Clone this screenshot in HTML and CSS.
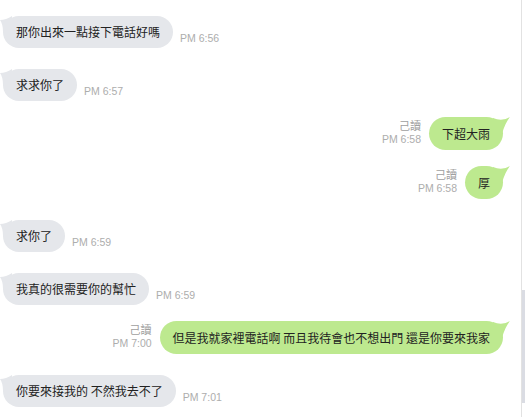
FILE: index.html
```html
<!DOCTYPE html>
<html lang="zh-Hant">
<head>
<meta charset="utf-8">
<title>Chat</title>
<link rel="stylesheet" href="styles.css">
</head>
<body>
<div class="window">
  <div class="chat">
    <div class="msg in">
      <div class="bubble">那你出來一點接下電話好嗎<svg class="tail" viewBox="0 0 12 16"><path d="M0 4 Q6 4 12 0 L12 16 L3 16 Q3 8 0 4 Z"/></svg></div>
      <span class="time">PM 6:56</span>
    </div>
    <div class="msg in">
      <div class="bubble">求求你了<svg class="tail" viewBox="0 0 12 16"><path d="M0 4 Q6 4 12 0 L12 16 L3 16 Q3 8 0 4 Z"/></svg></div>
      <span class="time">PM 6:57</span>
    </div>
    <div class="msg out">
      <div class="meta"><span class="read">己讀</span><span class="time">PM 6:58</span></div>
      <div class="bubble">下超大雨<svg class="tail" viewBox="0 0 18 18"><path d="M0 1 Q9 5 17 0 Q12 6 9 17 L0 17 Z"/></svg></div>
    </div>
    <div class="msg out">
      <div class="meta"><span class="read">己讀</span><span class="time">PM 6:58</span></div>
      <div class="bubble">厚<svg class="tail" viewBox="0 0 18 18"><path d="M0 1 Q9 5 17 0 Q12 6 9 17 L0 17 Z"/></svg></div>
    </div>
    <div class="msg in">
      <div class="bubble">求你了<svg class="tail" viewBox="0 0 12 16"><path d="M0 4 Q6 4 12 0 L12 16 L3 16 Q3 8 0 4 Z"/></svg></div>
      <span class="time">PM 6:59</span>
    </div>
    <div class="msg in">
      <div class="bubble">我真的很需要你的幫忙<svg class="tail" viewBox="0 0 12 16"><path d="M0 4 Q6 4 12 0 L12 16 L3 16 Q3 8 0 4 Z"/></svg></div>
      <span class="time">PM 6:59</span>
    </div>
    <div class="msg out">
      <div class="meta"><span class="read">己讀</span><span class="time">PM 7:00</span></div>
      <div class="bubble">但是我就家裡電話啊 而且我待會也不想出門 還是你要來我家<svg class="tail" viewBox="0 0 18 18"><path d="M0 1 Q9 5 17 0 Q12 6 9 17 L0 17 Z"/></svg></div>
    </div>
    <div class="msg in">
      <div class="bubble">你要來接我的 不然我去不了<svg class="tail" viewBox="0 0 12 16"><path d="M0 4 Q6 4 12 0 L12 16 L3 16 Q3 8 0 4 Z"/></svg></div>
      <span class="time">PM 7:01</span>
    </div>
  </div>
  <div class="scrollbar"><div class="thumb"></div></div>
</div>
</body>
</html>
```
FILE: styles.css
```css
html, body {
  margin: 0;
  padding: 0;
  background: #ffffff;
}

.window {
  display: flex;
  width: 525px;
  height: 417px;
  overflow: hidden;
}

.chat {
  flex: 1;
  display: flex;
  flex-direction: column;
  padding: 16px 18px 0 3px;
  font-family: "Noto Sans CJK TC", "Noto Sans", sans-serif;
}

.msg {
  display: flex;
  align-items: stretch;
}

.msg.in {
  justify-content: flex-start;
  margin-top: 21px;
}

.msg.out {
  justify-content: flex-end;
  margin-top: 16px;
}

.msg:first-child {
  margin-top: 0;
}

.bubble {
  position: relative;
  display: flex;
  align-items: center;
  padding: 0 13px;
  border-radius: 17px;
  font-size: 12px;
  line-height: 14px;
  color: #222222;
  white-space: nowrap;
}

.in .bubble {
  height: 32px;
  background: #e5e7eb;
}

.out .bubble {
  height: 33px;
  background: #bde98f;
}

.tail {
  position: absolute;
  top: 0;
}

.in .tail {
  left: -3px;
  width: 12px;
  height: 16px;
  fill: #e5e7eb;
}

.out .tail {
  right: -8px;
  width: 18px;
  height: 18px;
  fill: #bde98f;
}

.time {
  font-family: "Liberation Sans", Arial, sans-serif;
  font-size: 10.5px;
  line-height: 13px;
  color: #adadad;
}

.in .time {
  align-self: flex-end;
  margin: 0 0 3px 7px;
}

.meta {
  align-self: flex-end;
  display: flex;
  flex-direction: column;
  align-items: flex-end;
  margin: 0 8px 4px 0;
}

.read {
  font-size: 11px;
  line-height: 15px;
  color: #a0a0a0;
}

.scrollbar {
  width: 3px;
  border-left: 1px solid #e2e2e2;
  background: #ffffff;
}

.thumb {
  margin-top: 290px;
  height: 113px;
  background: #dadce3;
}
```
